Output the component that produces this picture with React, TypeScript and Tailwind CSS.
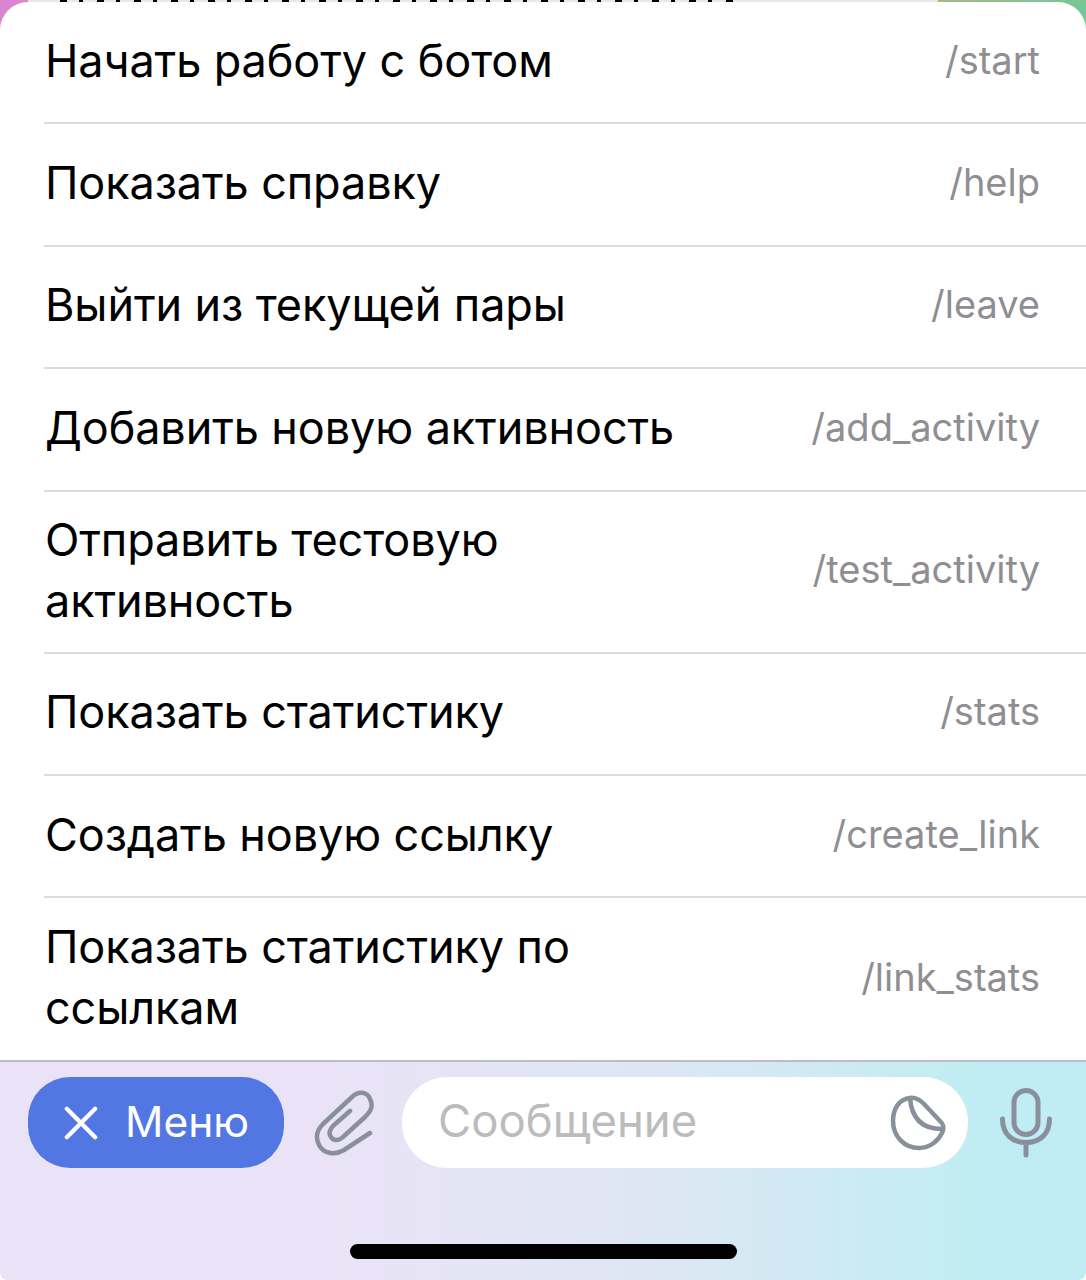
const rows = [
  { label: ['Начать работу с ботом'], cmd: '/start' },
  { label: ['Показать справку'], cmd: '/help' },
  { label: ['Выйти из текущей пары'], cmd: '/leave' },
  { label: ['Добавить новую активность'], cmd: '/add_activity' },
  { label: ['Отправить тестовую', 'активность'], cmd: '/test_activity' },
  { label: ['Показать статистику'], cmd: '/stats' },
  { label: ['Создать новую ссылку'], cmd: '/create_link' },
  { label: ['Показать статистику по', 'ссылкам'], cmd: '/link_stats' },
];

function Row({ label, cmd, last }: { label: string[]; cmd: string; last: boolean }) {
  const tall = label.length > 1;
  return (
    <div className={`ml-[44px] flex items-center justify-between pb-[4px] pl-[1px] pr-[46px] ${tall ? 'h-[162px]' : 'h-[122.4px]'} ${last ? '' : 'border-b-2 border-[#dcdcde]'}`}>
      <div className="text-[45px] leading-[61px] tracking-[-0.1px] text-black">
        {label.map((l) => (
          <div key={l}>{l}</div>
        ))}
      </div>
      <div className="text-[38px] text-[#8e8e93]">{cmd}</div>
    </div>
  );
}

function Paperclip() {
  return (
    <svg width="60" height="68" viewBox="22 12 60 68" fill="none" stroke="#8a8f9c" strokeWidth="4.5" strokeLinecap="round" strokeLinejoin="round">
      <path d="M78 56 L52 73 C42 79 31 76 27 68 C23 60 25 53 31 47 L60 20 C66 14 75 14 78 22 C82 30 78 35 73 40 L51 60 C47 64 41 64 39 60 C36 56 38 52 42 48 L58 34" />
    </svg>
  );
}

function StickerIcon() {
  return (
    <svg width="56" height="56" viewBox="10 14 56 56" fill="none" stroke="#8a8f9c" strokeWidth="4.5" strokeLinecap="round" strokeLinejoin="round">
      <path d="M30 17 C19 18 13 28 13 40 C13 55 24 67 39 67 C50 67 58 60 62 52 C65 46 63 43 60 40 L44 23 C39 18 35 16 30 17 Z" />
      <path d="M30 17 C31 30 36 48 62 48" />
    </svg>
  );
}

function Mic() {
  return (
    <svg width="52" height="70" viewBox="0 0 52 70" fill="none" stroke="#8a8f9c" strokeWidth="5" strokeLinecap="round">
      <rect x="14" y="2.5" width="24" height="44" rx="12" />
      <path d="M2.5 31 C2.5 46 12 54.5 26 54.5 C40 54.5 49.5 46 49.5 31" />
      <path d="M26 54.5 V67" />
    </svg>
  );
}

export default function App() {
  return (
    <div className="relative flex h-[1280px] w-[1086px] flex-col overflow-hidden bg-white" style={{ fontFamily: 'Inter, "Noto Sans", sans-serif' }}>
      {/* Chat peeking out above the sheet: only illegible letter bottoms show */}
      <div className="absolute inset-x-0 top-0 flex h-[30px] overflow-hidden bg-[#e8e8e8]">
        <div className="w-[28px] bg-[#d985cf]" />
        <div className="flex-1 pl-[32px]">
          <div className="h-[3px] w-[680px] bg-[repeating-linear-gradient(90deg,#000_0,#000_7px,transparent_7px,transparent_19px,#000_19px,#000_23px,transparent_23px,transparent_37px)]" />
        </div>
        <div className="w-[148px] bg-gradient-to-r from-[#a3b98a] to-[#75c795]" />
      </div>

      {/* Command list */}
      <div className="relative mt-[2px] h-[1058px] shrink-0 rounded-t-[28px] bg-white">
        {rows.map((r, i) => (
          <Row key={r.cmd} label={r.label} cmd={r.cmd} last={i === rows.length - 1} />
        ))}
      </div>

      {/* Input bar */}
      <div className="relative flex-1 rounded-b-[8px] border-t-2 border-[#bdbdc6] bg-gradient-to-r from-[#eae3f7] from-30% via-[#dfe6f3] via-58% to-[#c0edf3] to-90% pt-[15px]">
        <div className="flex h-[91px] items-center pl-[28px]">
          <div className="flex h-[91px] w-[256px] items-center rounded-[42px] bg-[#5277e2] pl-[36px] text-white">
            <svg width="34" height="34" viewBox="0 0 36 36" stroke="white" strokeWidth="4.5" strokeLinecap="round">
              <path d="M3 3 L33 33 M33 3 L3 33" />
            </svg>
            <span className="ml-[27px] mt-[-2px] text-[42.5px]">Меню</span>
          </div>
          <div className="ml-[30px] w-[60px] shrink-0">
            <Paperclip />
          </div>
          <div className="ml-[28px] flex h-[91px] w-[566px] items-center justify-between rounded-[45px] bg-white pl-[36px] pr-[22px]">
            <span className="mt-[-2px] text-[45.5px] text-[#bcbcbc]">Сообщение</span>
            <StickerIcon />
          </div>
          <div className="ml-[32px] w-[52px] shrink-0">
            <Mic />
          </div>
        </div>
        {/* Home indicator */}
        <div className="absolute left-[350px] top-[182px] h-[15px] w-[387px] rounded-full bg-black" />
      </div>
    </div>
  );
}
